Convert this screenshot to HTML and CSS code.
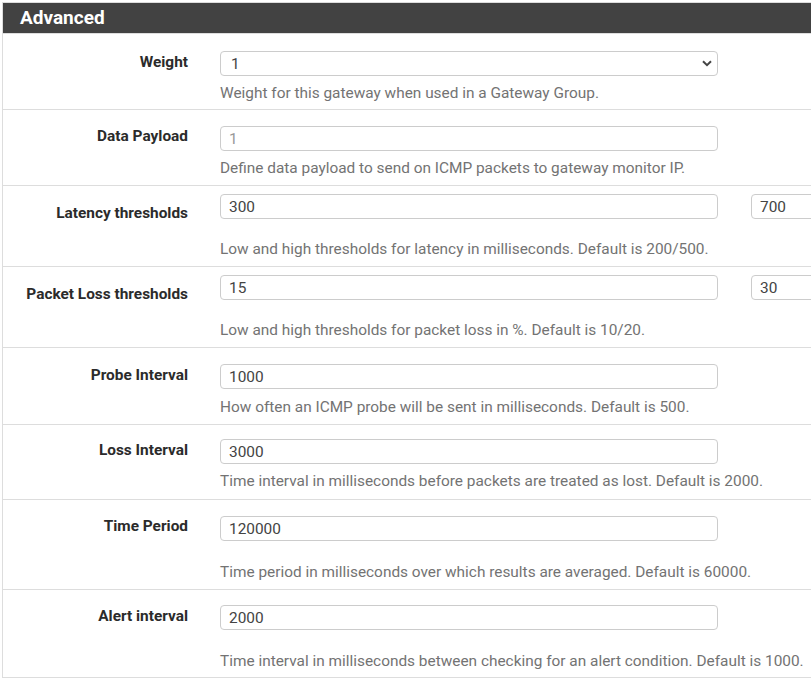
FILE: index.html
```html
<!DOCTYPE html>
<html lang="en">
<head>
    <meta charset="UTF-8">
    <title>Gateway - Advanced</title>
    <link rel="stylesheet" href="styles.css">
</head>
<body>

<!-- Panel "Advanced" -->
<div class="panel">
    <div class="panel-heading">Advanced</div>

    <div class="panel-body">

        <!-- Weight -->
        <div class="form-row row-weight">
            <div class="form-label">Weight</div>
            <div class="form-control-col">
                <div class="select-wrap">
                    <select class="form-select">
                        <option>1</option>
                    </select>
                    <svg class="select-arrow" width="10" height="7" viewBox="0 0 10 7">
                        <path d="M1 1.2 L5 5.2 L9 1.2" fill="none" stroke="#444" stroke-width="2"/>
                    </svg>
                </div>
                <div class="help">Weight for this gateway when used in a Gateway Group.</div>
            </div>
        </div>

        <!-- Data Payload -->
        <div class="form-row row-payload">
            <div class="form-label">Data Payload</div>
            <div class="form-control-col">
                <input class="form-input" type="text" placeholder="1">
                <div class="help">Define data payload to send on ICMP packets to gateway monitor IP.</div>
            </div>
        </div>

        <!-- Latency thresholds -->
        <div class="form-row row-pair">
            <div class="form-label">Latency thresholds</div>
            <div class="form-control-col">
                <div class="input-pair">
                    <input class="form-input" type="text" value="300">
                    <input class="form-input" type="text" value="700">
                </div>
                <div class="help help-wide">Low and high thresholds for latency in milliseconds. Default is 200/500.</div>
            </div>
        </div>

        <!-- Packet Loss thresholds -->
        <div class="form-row row-pair">
            <div class="form-label">Packet Loss thresholds</div>
            <div class="form-control-col">
                <div class="input-pair">
                    <input class="form-input" type="text" value="15">
                    <input class="form-input" type="text" value="30">
                </div>
                <div class="help help-wide">Low and high thresholds for packet loss in %. Default is 10/20.</div>
            </div>
        </div>

        <!-- Probe Interval -->
        <div class="form-row row-probe">
            <div class="form-label">Probe Interval</div>
            <div class="form-control-col">
                <input class="form-input" type="text" value="1000">
                <div class="help">How often an ICMP probe will be sent in milliseconds. Default is 500.</div>
            </div>
        </div>

        <!-- Loss Interval -->
        <div class="form-row row-loss">
            <div class="form-label">Loss Interval</div>
            <div class="form-control-col">
                <input class="form-input" type="text" value="3000">
                <div class="help">Time interval in milliseconds before packets are treated as lost. Default is 2000.</div>
            </div>
        </div>

        <!-- Time Period -->
        <div class="form-row row-period">
            <div class="form-label">Time Period</div>
            <div class="form-control-col">
                <input class="form-input" type="text" value="120000">
                <div class="help help-wide">Time period in milliseconds over which results are averaged. Default is 60000.</div>
            </div>
        </div>

        <!-- Alert interval -->
        <div class="form-row row-alert">
            <div class="form-label">Alert interval</div>
            <div class="form-control-col">
                <input class="form-input" type="text" value="2000">
                <div class="help help-wide">Time interval in milliseconds between checking for an alert condition. Default is 1000.</div>
            </div>
        </div>

    </div>
</div>

</body>
</html>
```

FILE: styles.css
```css
html, body {
    overflow: hidden;
}

body {
    margin: 0;
    padding-top: 2px;
    padding-left: 2px;
    background-color: #fff;
    font-family: Roboto, "Liberation Sans", sans-serif;
    font-size: 15.4px;
    color: #333;
}

.panel {
    width: 1100px;
    border: 1px solid #ddd;
}

.panel-heading {
    height: 30px;
    line-height: 30px;
    padding-left: 17px;
    background-color: #424242;
    color: #fff;
    font-size: 19px;
    font-weight: bold;
    border-bottom: 1px solid #ddd;
}

.form-row {
    display: flex;
    align-items: flex-start;
    border-bottom: 1px solid #ddd;
}

.form-row:last-child {
    border-bottom: none;
}

.form-label {
    width: 185px;
    flex-shrink: 0;
    padding-top: 17px;
    text-align: right;
    font-weight: bold;
    line-height: 20px;
    color: #2b2b2b;
}

.form-control-col {
    margin-left: 32px;
    padding-bottom: 7px;
}

.form-input,
.form-select {
    display: block;
    box-sizing: border-box;
    width: 498px;
    height: 25px;
    padding: 0 8px;
    border: 1px solid #ccc;
    border-radius: 4px;
    background-color: #fff;
    font-family: Roboto, "Liberation Sans", sans-serif;
    font-size: 15.4px;
    color: #444;
    outline: none;
}

.form-input::placeholder {
    color: #999;
}

.select-wrap {
    position: relative;
    width: 498px;
}

.form-select {
    appearance: none;
    -webkit-appearance: none;
    padding-left: 10px;
}

.select-arrow {
    position: absolute;
    right: 6px;
    top: 9px;
    pointer-events: none;
}

.input-pair {
    display: flex;
    gap: 33px;
}

.help {
    margin-top: 7px;
    line-height: 20px;
    color: #737373;
    white-space: nowrap;
}

.help-wide {
    margin-top: 20px;
}

/* Abstände je Zeile */
.row-weight .form-control-col {
    padding-top: 17px;
    padding-bottom: 6px;
}

.row-weight .form-label {
    padding-top: 18px;
}

.row-payload .form-control-col {
    padding-top: 16px;
    padding-bottom: 7px;
}

.row-payload .form-label {
    padding-top: 16px;
}

.row-pair .form-control-col {
    padding-top: 8px;
}

.row-probe .form-control-col {
    padding-top: 16px;
}

.row-probe .form-label {
    padding-top: 17px;
}

.row-probe .help {
    margin-top: 8px;
}

.row-loss .form-control-col {
    padding-top: 14px;
    padding-bottom: 8px;
}

.row-loss .form-label {
    padding-top: 15px;
}

.row-period .form-control-col {
    padding-top: 16px;
    padding-bottom: 7px;
}

.row-period .form-label {
    padding-top: 16px;
}

.row-period .help {
    margin-top: 21px;
}

.row-alert .form-control-col {
    padding-top: 15px;
    padding-bottom: 6px;
}

.row-alert .form-label {
    padding-top: 16px;
}

.row-alert .help {
    margin-top: 21px;
}
```
